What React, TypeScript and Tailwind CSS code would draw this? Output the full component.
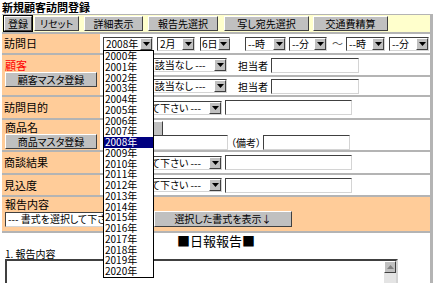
import React from "react";

const bevel = "border border-t-white border-l-white border-r-[#404040] border-b-[#404040]";
const inset = "border border-t-[#404040] border-l-[#404040] border-r-[#d4d4d4] border-b-[#d4d4d4]";

function Arrow() {
  return (
    <span className={`flex h-[12px] w-[12px] shrink-0 items-center justify-center bg-[#c0c0c0] ${bevel}`}>
      <svg width="7" height="4" viewBox="0 0 7 4">
        <path d="M0 0h7L3.5 4z" fill="#000" />
      </svg>
    </span>
  );
}

function Select({ text, className = "", pad = "pl-[2px]" }: { text: string; className?: string; pad?: string }) {
  return (
    <div className={`flex h-[14px] shrink-0 items-center bg-white text-[10px] ${inset} ${className}`}>
      <span className={`flex-1 whitespace-nowrap leading-[12px] ${pad}`}>{text}</span>
      <Arrow />
    </div>
  );
}

function Input({ className = "" }: { className?: string }) {
  return <div className={`h-[15px] shrink-0 bg-white ${inset} ${className}`} />;
}

function Btn({ children, className = "" }: { children?: React.ReactNode; className?: string }) {
  return (
    <div className={`flex h-[15px] shrink-0 items-center justify-center whitespace-nowrap bg-[#c0c0c0] text-[10px] leading-none ${bevel} ${className}`}>
      {children}
    </div>
  );
}

const years = Array.from({ length: 21 }, (_, i) => 2000 + i);

export default function App() {
  return (
    <div className="relative h-[283px] w-[435px] overflow-hidden bg-white font-['Noto_Sans_CJK_JP',sans-serif] text-[11px] text-black [font-feature-settings:'palt']">
      <div className="h-[14px] pl-[2px] font-bold leading-[14px]">新規顧客訪問登録</div>

      <div className="ml-[2px] w-[431px] border-r-[3px] border-[#b4b4b4]">
        {/* toolbar */}
        <div className="flex h-[20px] items-center border-t border-b-2 border-[#b4b4b4] bg-[#ffffcc]">
          <Btn className="ml-[2px] w-[28px] shadow-[0_0_0_1px_#000]">登録</Btn>
          <Btn className="ml-[2px] w-[45px]">リセット</Btn>
          <Btn className="ml-[5px] w-[59px]">詳細表示</Btn>
          <Btn className="ml-[5px] w-[70px]">報告先選択</Btn>
          <Btn className="ml-[6px] w-[85px]">写し宛先選択</Btn>
          <Btn className="ml-[4px] w-[75px]">交通費精算</Btn>
        </div>

        {/* 訪問日 */}
        <div className="flex h-[21px] border-b-2 border-[#b4b4b4]">
          <div className="flex w-[98px] items-center bg-[#ffcc99] pl-[2px]">訪問日</div>
          <div className="ml-[3px] flex items-center">
            <Select text="2008年" className="w-[50px]" />
            <Select text="2月" className="ml-[4px] w-[38px]" />
            <Select text="6日" pad="pl-[1px]" className="ml-[5px] w-[30px]" />
            <Select text="--時" className="ml-[15px] w-[41px]" />
            <Select text="--分" className="ml-[3px] w-[38px]" />
            <span className="ml-[5px] w-[12px] text-[#555]">～</span>
            <Select text="--時" className="ml-[2px] w-[39px]" />
            <Select text="--分" className="ml-[4px] w-[40px]" />
          </div>
        </div>

        {/* 顧客 */}
        <div className="flex h-[42px] border-b-2 border-[#b4b4b4]">
          <div className="flex w-[98px] flex-col bg-[#ffcc99] pl-[3px] pt-[4px]">
            <span className="leading-[13px] text-[#ff0000]">顧客</span>
            <Btn className="w-[92px]">顧客マスタ登録</Btn>
          </div>
          <div className="ml-[3px] flex flex-1 flex-col">
            <div className="flex h-[22px] items-center border-b-2 border-[#b4b4b4]">
              <Select text="--- 該当なし ---" pad="pl-[38px]" className="w-[124px]" />
              <span className="ml-[11px] mr-[3px] text-[10px]">担当者</span>
              <Input className="w-[88px]" />
            </div>
            <div className="flex h-[18px] items-center">
              <Select text="--- 該当なし ---" pad="pl-[38px]" className="w-[124px]" />
              <span className="ml-[11px] mr-[3px] text-[10px]">担当者</span>
              <Input className="w-[88px]" />
            </div>
          </div>
        </div>

        {/* 訪問目的 */}
        <div className="flex h-[23px] border-b-2 border-[#b4b4b4]">
          <div className="flex w-[98px] items-center bg-[#ffcc99] pl-[2px]">訪問目的</div>
          <div className="ml-[3px] flex items-center">
            <Select text="--- 選択して下さい ---" pad="pl-[6px]" className="w-[119px]" />
            <Input className="ml-[3px] w-[127px]" />
          </div>
        </div>

        {/* 商品名 */}
        <div className="flex h-[32px] border-b-2 border-[#b4b4b4]">
          <div className="flex w-[98px] flex-col bg-[#ffcc99] pl-[3px] pt-[1px]">
            <span className="leading-[13px]">商品名</span>
            <Btn className="w-[92px]">商品マスタ登録</Btn>
          </div>
          <div className="ml-[3px] flex flex-col">
            <div className="mt-[1px] flex h-[14px] items-center">
              <Input className="w-[18px]" />
              <Btn className="ml-[2px] h-[14px] w-[40px]">検索</Btn>
            </div>
            <div className="flex h-[15px] items-center">
              <Input className="w-[125px]" />
              <span className="ml-[3px] mr-[2px] text-[10px]">（備考）</span>
              <Input className="w-[87px]" />
            </div>
          </div>
        </div>

        {/* 商談結果 */}
        <div className="flex h-[23px] border-b-2 border-[#b4b4b4]">
          <div className="flex w-[98px] items-center bg-[#ffcc99] pl-[2px]">商談結果</div>
          <div className="ml-[3px] flex items-center">
            <Select text="--- 選択して下さい ---" pad="pl-[6px]" className="w-[119px]" />
            <Input className="ml-[3px] w-[127px]" />
          </div>
        </div>

        {/* 見込度 */}
        <div className="flex h-[22px] border-b-2 border-[#b4b4b4]">
          <div className="flex w-[98px] items-center bg-[#ffcc99] pl-[2px]">見込度</div>
          <div className="ml-[3px] flex items-center">
            <Select text="--- 選択して下さい ---" pad="pl-[6px]" className="w-[119px]" />
            <Input className="ml-[3px] w-[127px]" />
          </div>
        </div>

        {/* 報告内容 */}
        <div className="flex h-[36px] flex-col border-b-2 border-[#b4b4b4] bg-[#ffcc99] pl-[3px] pt-[1px]">
          <span className="leading-[13px]">報告内容</span>
          <div className="flex h-[16px] items-center">
            <Select text="--- 書式を選択して下さい ---" className="h-[15px] w-[147px]" />
            <Btn className="ml-[2px] h-[16px] w-[138px]">選択した書式を表示↓</Btn>
          </div>
        </div>

        <div className="mt-[1px] h-[14px] text-center text-[13px] leading-[14px]">■日報報告■</div>
        <div className="h-[11px] pl-[3px] text-[10px] leading-[11px]">1. 報告内容</div>
        <div className="ml-[3px] flex h-[40px] w-[393px] justify-end border-2 border-t-[#404040] border-l-[#404040] border-r-[#d4d4d4] border-b-[#d4d4d4] bg-white">
          <div className="flex w-[12px] flex-col bg-[#e4e4e4]">
            <span className={`flex h-[12px] items-center justify-center bg-[#c0c0c0] ${bevel}`}>
              <svg width="7" height="4" viewBox="0 0 7 4">
                <path d="M0 4h7L3.5 0z" fill="#808080" />
              </svg>
            </span>
          </div>
        </div>
      </div>

      {/* open year list */}
      <div className="absolute left-[103px] top-[50px] w-[51px] border border-black bg-white text-[10px]">
        {years.map((y) => (
          <div
            key={y}
            className={`h-[10.75px] whitespace-nowrap pl-[1px] leading-[10.75px] ${y === 2008 ? "bg-[#000080] text-white" : ""}`}
          >
            {y}年
          </div>
        ))}
      </div>
    </div>
  );
}
